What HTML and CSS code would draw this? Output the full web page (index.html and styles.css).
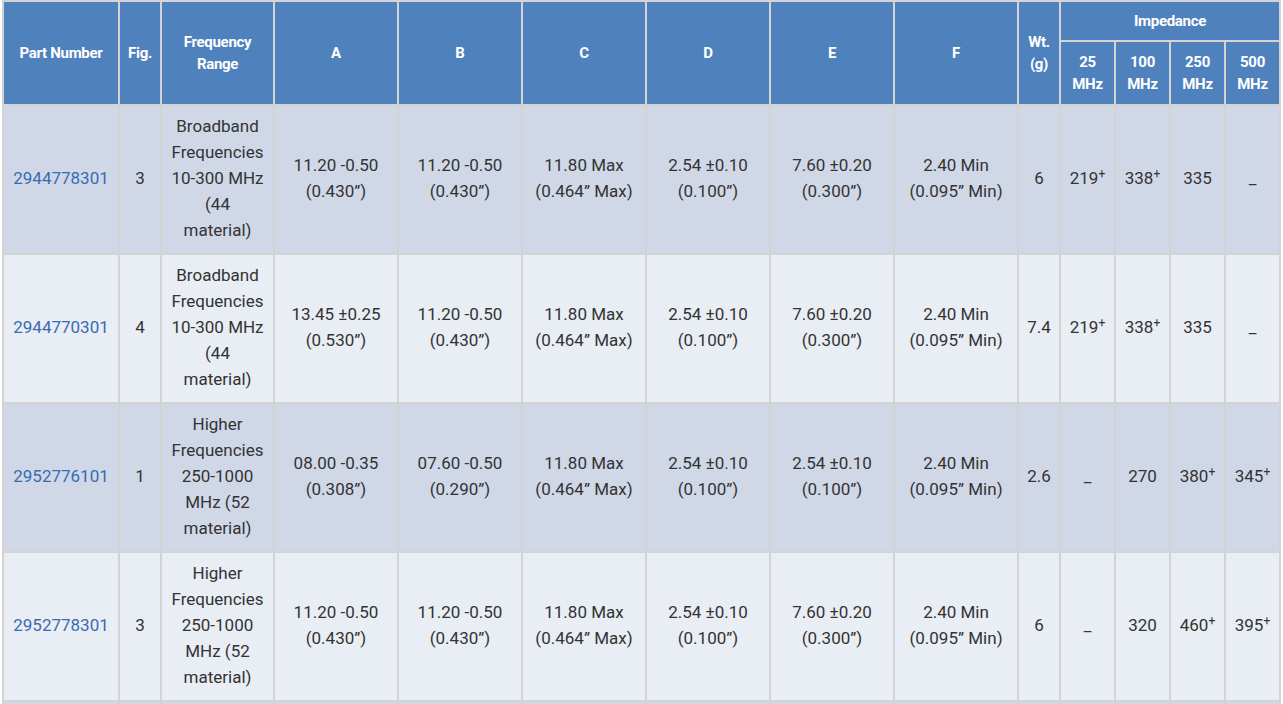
FILE: index.html
```html
<!DOCTYPE html>
<html>
<head>
<meta charset="utf-8">
<link rel="stylesheet" href="styles.css">
</head>
<body>
<div class="wrap">
<table class="spec">
  <colgroup>
    <col class="c-part"><col class="c-fig"><col class="c-freq">
    <col class="c-dim"><col class="c-dim"><col class="c-dim"><col class="c-dim"><col class="c-dim"><col class="c-dim">
    <col class="c-wt"><col class="c-imp"><col class="c-imp"><col class="c-imp"><col class="c-imp">
  </colgroup>
  <thead>
    <tr class="h1">
      <th rowspan="2">Part Number</th>
      <th rowspan="2">Fig.</th>
      <th rowspan="2">Frequency<br>Range</th>
      <th rowspan="2">A</th>
      <th rowspan="2">B</th>
      <th rowspan="2">C</th>
      <th rowspan="2">D</th>
      <th rowspan="2">E</th>
      <th rowspan="2">F</th>
      <th rowspan="2">Wt.<br>(g)</th>
      <th colspan="4">Impedance</th>
    </tr>
    <tr class="h2">
      <th>25<br>MHz</th>
      <th>100<br>MHz</th>
      <th>250<br>MHz</th>
      <th>500<br>MHz</th>
    </tr>
  </thead>
  <tbody>
    <tr class="odd">
      <td><a class="part" href="#">2944778301</a></td>
      <td>3</td>
      <td>Broadband<br>Frequencies<br>10-300 MHz<br>(44<br>material)</td>
      <td>11.20 -0.50<br>(0.430”)</td>
      <td>11.20 -0.50<br>(0.430”)</td>
      <td>11.80 Max<br>(0.464” Max)</td>
      <td>2.54 ±0.10<br>(0.100”)</td>
      <td>7.60 ±0.20<br>(0.300”)</td>
      <td>2.40 Min<br>(0.095” Min)</td>
      <td>6</td>
      <td>219<sup>+</sup></td>
      <td>338<sup>+</sup></td>
      <td>335</td>
      <td>_</td>
    </tr>
    <tr class="even">
      <td><a class="part" href="#">2944770301</a></td>
      <td>4</td>
      <td>Broadband<br>Frequencies<br>10-300 MHz<br>(44<br>material)</td>
      <td>13.45 ±0.25<br>(0.530”)</td>
      <td>11.20 -0.50<br>(0.430”)</td>
      <td>11.80 Max<br>(0.464” Max)</td>
      <td>2.54 ±0.10<br>(0.100”)</td>
      <td>7.60 ±0.20<br>(0.300”)</td>
      <td>2.40 Min<br>(0.095” Min)</td>
      <td>7.4</td>
      <td>219<sup>+</sup></td>
      <td>338<sup>+</sup></td>
      <td>335</td>
      <td>_</td>
    </tr>
    <tr class="odd">
      <td><a class="part" href="#">2952776101</a></td>
      <td>1</td>
      <td>Higher<br>Frequencies<br>250-1000<br>MHz (52<br>material)</td>
      <td>08.00 -0.35<br>(0.308”)</td>
      <td>07.60 -0.50<br>(0.290”)</td>
      <td>11.80 Max<br>(0.464” Max)</td>
      <td>2.54 ±0.10<br>(0.100”)</td>
      <td>2.54 ±0.10<br>(0.100”)</td>
      <td>2.40 Min<br>(0.095” Min)</td>
      <td>2.6</td>
      <td>_</td>
      <td>270</td>
      <td>380<sup>+</sup></td>
      <td>345<sup>+</sup></td>
    </tr>
    <tr class="even">
      <td><a class="part" href="#">2952778301</a></td>
      <td>3</td>
      <td>Higher<br>Frequencies<br>250-1000<br>MHz (52<br>material)</td>
      <td>11.20 -0.50<br>(0.430”)</td>
      <td>11.20 -0.50<br>(0.430”)</td>
      <td>11.80 Max<br>(0.464” Max)</td>
      <td>2.54 ±0.10<br>(0.100”)</td>
      <td>7.60 ±0.20<br>(0.300”)</td>
      <td>2.40 Min<br>(0.095” Min)</td>
      <td>6</td>
      <td>_</td>
      <td>320</td>
      <td>460<sup>+</sup></td>
      <td>395<sup>+</sup></td>
    </tr>
    <tr class="odd">
      <td></td><td></td><td></td><td></td><td></td><td></td><td></td>
      <td></td><td></td><td></td><td></td><td></td><td></td><td></td>
    </tr>
  </tbody>
</table>
</div>
</body>
</html>
```

FILE: styles.css
```css
html, body {
  margin: 0;
  padding: 0;
  background: #ffffff;
}
.wrap {
  padding-left: 2px;
}
.spec {
  border-collapse: collapse;
  table-layout: fixed;
  width: 1279px;
  font-family: Roboto, "Liberation Sans", sans-serif;
  font-size: 17px;
  color: #333333;
}
.c-part { width: 116px; }
.c-fig { width: 42px; }
.c-freq { width: 113px; }
.c-dim { width: 124px; }
.c-wt { width: 42px; }
.c-imp { width: 55px; }
.spec th, .spec td {
  border: 2px solid #d3d3d3;
  text-align: center;
  vertical-align: middle;
}
.spec th {
  background: #4f81bd;
  color: #ffffff;
  font-weight: 700;
  font-size: 15px;
  line-height: 22px;
  letter-spacing: -0.3px;
  padding: 8px 2px;
}
.spec .h2 th {
  padding: 9px 2px;
}
.spec td {
  line-height: 26px;
  padding: 7px 4px 10px;
  height: 26px;
}
.odd td { background: #d0d8e8; }
.even td { background: #e9edf4; }
.part {
  color: #3a6bb1;
  text-decoration: none;
}
sup {
  font-size: 12px;
  line-height: 0;
  vertical-align: 6px;
}
```
